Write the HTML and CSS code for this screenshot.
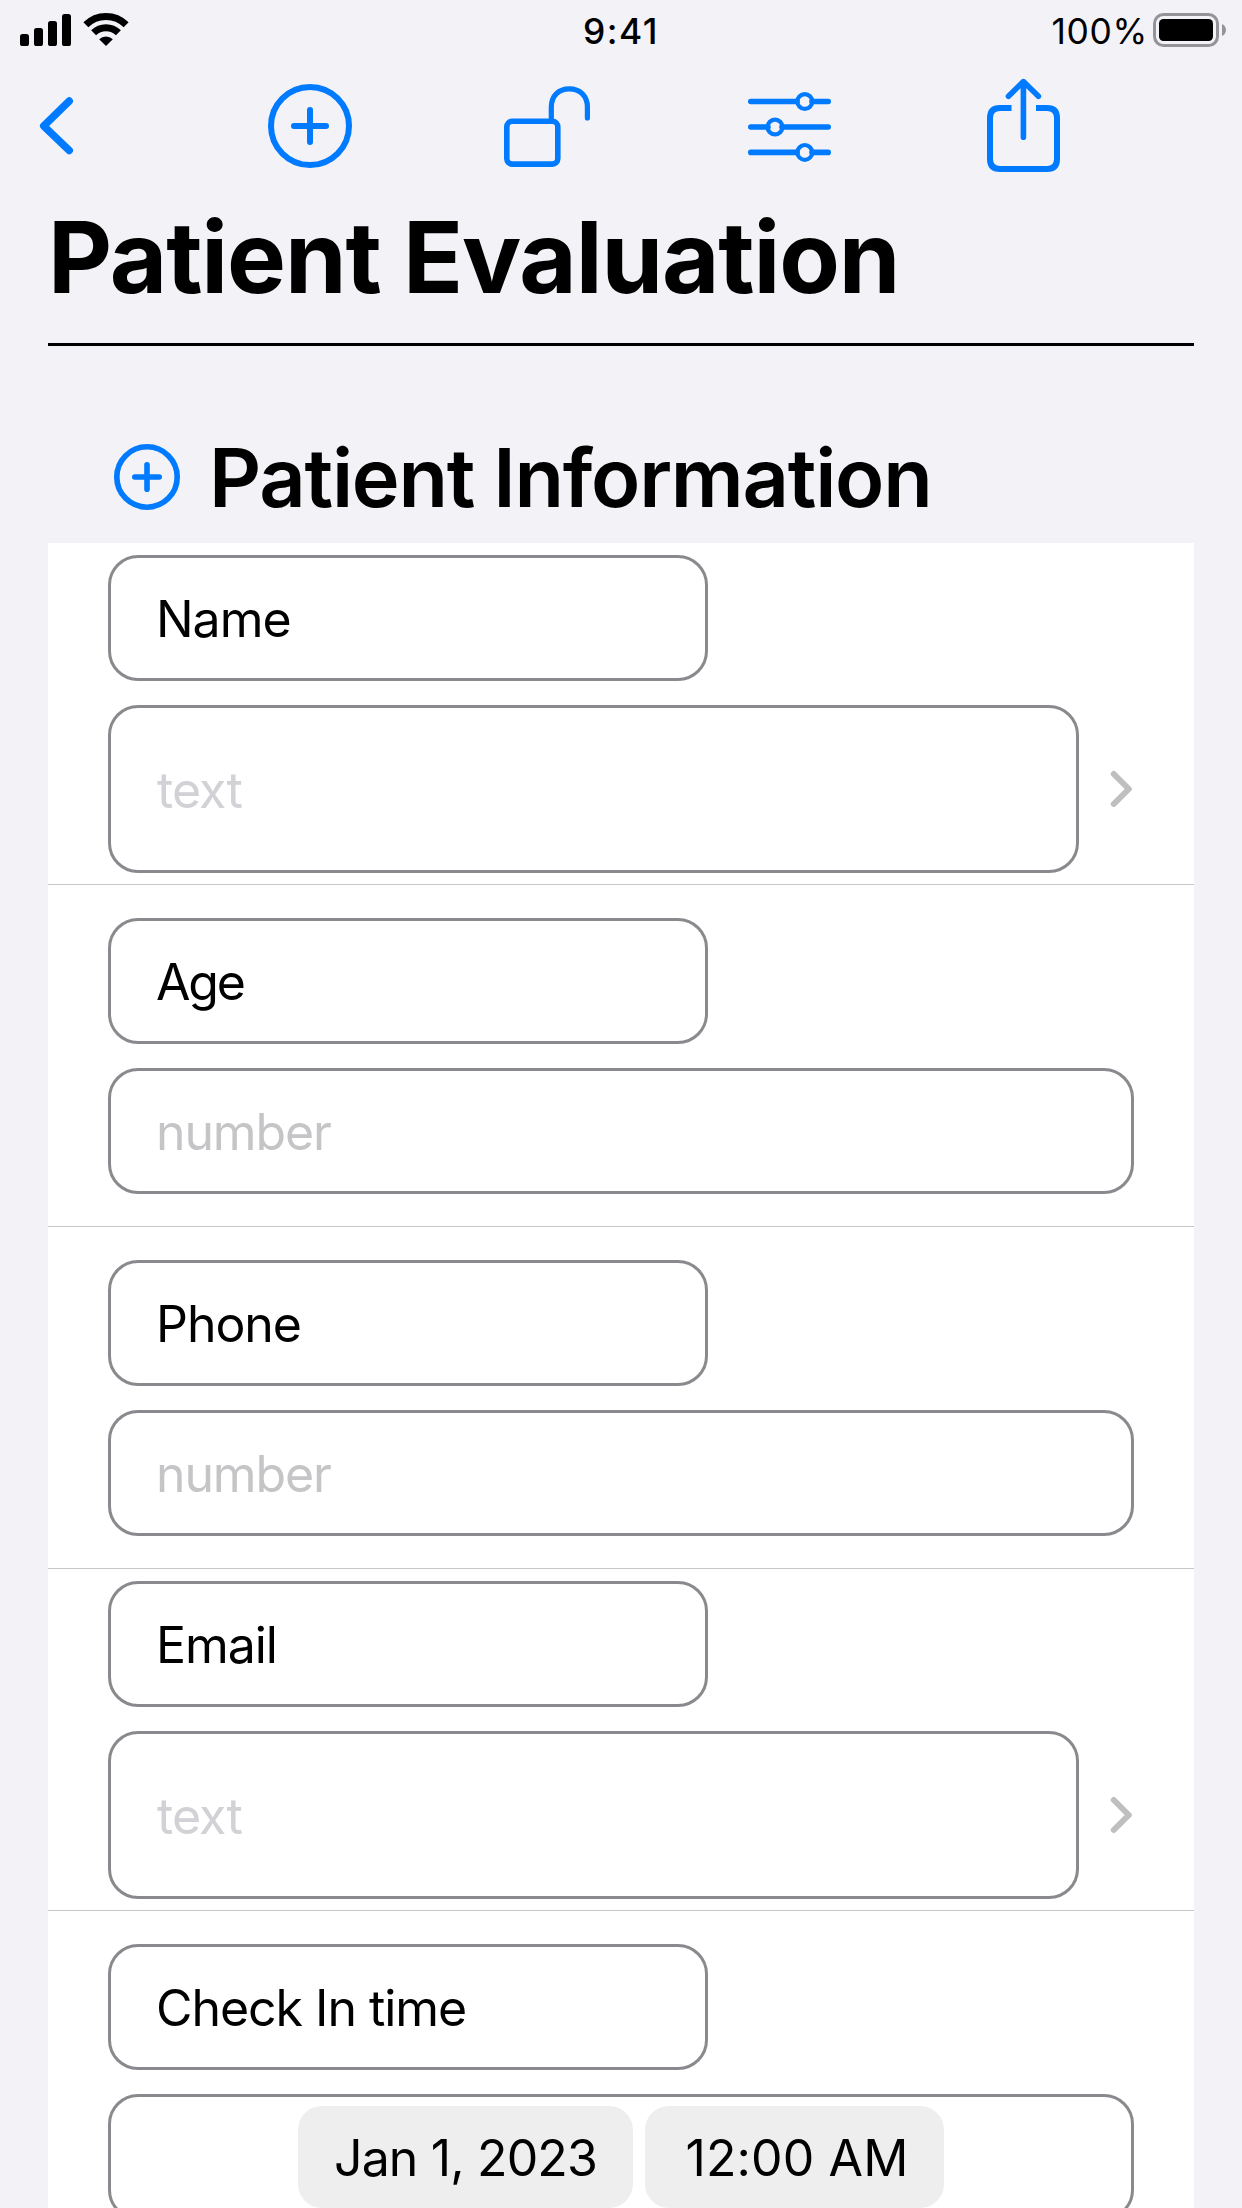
FILE: index.html
```html
<!DOCTYPE html>
<html lang="en">
<head>
<meta charset="utf-8">
<title>Patient Evaluation</title>
<link rel="stylesheet" href="styles.css">
</head>
<body>
<div class="status">
  <div class="status-left">
    <svg width="114" height="60" viewBox="20 0 114 60">
      <rect x="20" y="34" width="9" height="12" rx="2.6"/>
      <rect x="34" y="28" width="9" height="18" rx="2.6"/>
      <rect x="48" y="21" width="9" height="25" rx="2.6"/>
      <rect x="62" y="14" width="9" height="32" rx="2.6"/>
      <g fill="none" stroke="#000">
        <path stroke-width="7" d="M85.85 24.85A28.5 28.5 0 0 1 126.15 24.85"/>
        <path stroke-width="7" d="M93.6 32.8A17.5 17.5 0 0 1 118.4 32.8"/>
      </g>
      <path d="M106 46L99.2 39.2A9.6 9.6 0 0 1 112.8 39.2Z"/>
    </svg>
  </div>
  <div class="time">9:41</div>
  <div class="status-right">
    <span class="percent">100%</span>
    <svg width="76" height="60" viewBox="1152 0 76 60">
      <rect x="1154.5" y="14.5" width="63" height="31" rx="9" fill="none" stroke="#949498" stroke-width="3"/>
      <rect x="1159" y="19" width="54" height="22" rx="4.5"/>
      <path d="M1222 24C1227.3 26 1227.3 34 1222 36Z" fill="#949498"/>
    </svg>
  </div>
</div>

<nav class="toolbar">
  <svg class="back" width="60" height="128" viewBox="30 62 60 128"><path stroke-width="7.4" d="M69.3 101L43.7 126L69.3 150.5"/></svg>
  <svg class="add" width="100" height="128" viewBox="260 62 100 128"><circle cx="310" cy="126" r="39"/><path d="M294 126H326M310 110V142"/></svg>
  <svg class="lock" width="100" height="128" viewBox="497 62 100 128" stroke-width="5.6"><rect x="506.8" y="121.3" width="51" height="42.8" rx="5.5"/><path stroke-width="5.2" d="M551.3 121V107C551.3 95.5 559 88.8 569.3 88.8S587.4 95.5 587.4 107V118"/></svg>
  <svg class="sliders" width="100" height="128" viewBox="740 62 100 128" stroke-width="5.6"><path d="M750.8 101.5H797M812 101.5H828.2M750.8 127H768M782 127H828.2M750.8 152.4H797M812 152.4H828.2"/><g stroke-width="4.2"><circle cx="804.8" cy="101.5" r="7.4"/><circle cx="775" cy="127" r="7.4"/><circle cx="804.8" cy="152.4" r="7.4"/></g></svg>
  <svg class="share" width="100" height="128" viewBox="973 62 100 128"><path d="M1023.4 82V137.2M1008.5 96.2L1023.4 81.6L1038.4 96.2" stroke-width="5.6"/><path stroke-linecap="butt" d="M1011.5 107.9H1000Q990 107.9 990 118V159Q990 169 1000 169H1047Q1057 169 1057 159V118Q1057 107.9 1047 107.9H1036"/></svg>
</nav>

<main class="page">
  <h1 class="title">Patient Evaluation</h1>
  <div class="section-head">
    <svg width="68" height="68" viewBox="113 443 68 68"><circle cx="147" cy="477" r="30.2"/><path d="M134.8 477H159.2M147 464.8V489.2"/></svg>
    <h2>Patient Information</h2>
  </div>
  <div class="list">
    <div class="row">
      <div class="field label">Name</div>
      <div class="value"><div class="field tall">text</div><svg class="chevron" width="55" height="42" viewBox="1079 768 55 42"><path d="M1113.8 774L1128.8 789L1113.8 804"/></svg></div>
    </div>
    <div class="row">
      <div class="field label tight">Age</div>
      <div class="value"><div class="field number">number</div></div>
    </div>
    <div class="row">
      <div class="field label">Phone</div>
      <div class="value"><div class="field number">number</div></div>
    </div>
    <div class="row">
      <div class="field label">Email</div>
      <div class="value"><div class="field tall">text</div><svg class="chevron" width="55" height="42" viewBox="1079 768 55 42"><path d="M1113.8 774L1128.8 789L1113.8 804"/></svg></div>
    </div>
    <div class="row last">
      <div class="field label">Check In time</div>
      <div class="value"><div class="field datetime"><span class="pill date">Jan 1, 2023</span><span class="pill clock">12:00 AM</span></div></div>
    </div>
  </div>
</main>
</body>
</html>
```
FILE: styles.css
```css
* { box-sizing: border-box; }
html, body { height: 2208px; overflow: hidden; }
body {
  margin: 0;
  width: 1242px;
  background: #f2f2f7;
  color: #000;
  font-family: Inter, "Liberation Sans", sans-serif;
}
svg { display: block; flex: none; }

.status {
  display: grid;
  grid-template-columns: 1fr auto 1fr;
  height: 62px;
  padding: 0 14px 0 20px;
  font-size: 35.4px;
  line-height: 64px;
}
.time { font-weight: 500; letter-spacing: 1.5px; margin-right: 6px; }
.status-right { display: flex; justify-content: flex-end; gap: 4px; }
.percent { letter-spacing: 0.7px; }

.toolbar {
  display: flex;
  height: 128px;
  padding-left: 30px;
}
.toolbar svg, .section-head svg {
  fill: none;
  stroke: #007aff;
  stroke-linecap: round;
  stroke-linejoin: round;
}
.toolbar .back, .toolbar .add, .toolbar .share { stroke-width: 6; }
.add { margin-left: 170px; }
.lock { margin-left: 137px; }
.sliders { margin-left: 143px; }
.share { margin-left: 133px; }

.page { padding: 7px 48px 0; }
.title {
  margin: 0;
  padding-bottom: 26px;
  border-bottom: 3px solid #000;
  font-size: 99px;
  font-weight: 700;
  line-height: 120px;
  letter-spacing: -1.1px;
  white-space: nowrap;
}
.section-head {
  display: flex;
  align-items: center;
  gap: 28px;
  padding: 81px 0 16px 65px;
}
.section-head svg { stroke-width: 5.6; }
.section-head h2 {
  margin: 0;
  padding-top: 2px;
  font-size: 81px;
  font-weight: 600;
  line-height: 98px;
  letter-spacing: -1.25px;
  white-space: nowrap;
}

.list { background: #fff; }
.row {
  display: flex;
  flex-direction: column;
  justify-content: center;
  gap: 24px;
  height: 342px;
  padding: 0 60px;
  border-bottom: 1px solid #c6c6c8;
}
.row.last { border-bottom: 0; height: 341px; }
.value { display: flex; align-items: center; }
.field {
  display: flex;
  align-items: center;
  flex: 1;
  height: 126px;
  padding: 2px 45px 0;
  border: 3px solid #8a8a8e;
  border-radius: 30px;
  font-size: 50px;
  letter-spacing: -1.05px;
  white-space: nowrap;
}
.label { flex: none; width: 600px; padding-top: 3px; }
.tight { letter-spacing: -2.2px; }
.tall { height: 168px; padding-left: 46px; color: #d1d1d6; letter-spacing: -0.9px; }
.number { color: #c5c5c7; letter-spacing: -1.15px; }
.chevron {
  fill: none;
  stroke: #bfbfbf;
  stroke-width: 6;
  stroke-linecap: round;
  stroke-linejoin: round;
}
.datetime { padding: 0 0 0 187px; gap: 12px; }
.pill {
  height: 102px;
  padding-top: 2px;
  border-radius: 24px;
  background: #eee;
  line-height: 101px;
  text-align: center;
}
.date { width: 335px; letter-spacing: -0.85px; }
.clock { width: 299px; padding-left: 5px; letter-spacing: 0.1px; }
```
